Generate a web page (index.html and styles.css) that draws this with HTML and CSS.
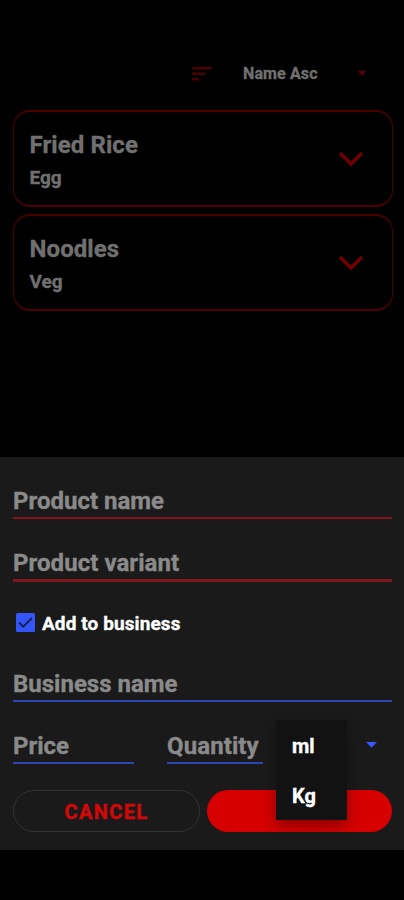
FILE: index.html
```html
<!DOCTYPE html>
<html lang="en">
<head>
<meta charset="utf-8">
<title>Products</title>
<link rel="stylesheet" href="styles.css">
</head>
<body>
<main class="screen">
  <section class="products">
    <div class="sort-bar">
      <svg class="sort-icon" width="20" height="14" viewBox="0 0 20 14"><path d="M0 0h20v2.6H0zM0 5.6h13.5v2.5H0zM0 11h7v2.6H0z" fill="#4a0000"/></svg>
      <span class="sort-label">Name Asc</span>
      <svg class="sort-caret" width="8" height="5" viewBox="0 0 8 5"><path d="M0 0h8L4 4.8z" fill="#620000"/></svg>
    </div>
    <article class="card">
      <div>
        <h2 class="card-title">Fried Rice</h2>
        <p class="card-sub">Egg</p>
      </div>
      <svg width="26" height="16" viewBox="0 0 26 16"><path d="M2 2l11 11L24 2" fill="none" stroke="#700000" stroke-width="3.6"/></svg>
    </article>
    <article class="card">
      <div>
        <h2 class="card-title">Noodles</h2>
        <p class="card-sub">Veg</p>
      </div>
      <svg width="26" height="16" viewBox="0 0 26 16"><path d="M2 2l11 11L24 2" fill="none" stroke="#700000" stroke-width="3.6"/></svg>
    </article>
  </section>
  <form class="sheet">
    <div class="field red">Product name</div>
    <div class="field red variant">Product variant</div>
    <div class="check-row">
      <svg width="19" height="19" viewBox="0 0 19 19"><rect width="19" height="19" rx="1.5" fill="#3355fa"/><path d="M3 9.5l4.2 4.2L16 5" fill="none" stroke="#17204f" stroke-width="1.8"/></svg>
      <span class="check-label">Add to business</span>
    </div>
    <div class="field blue business">Business name</div>
    <div class="amounts">
      <div class="field blue price">Price</div>
      <div class="field blue quantity">Quantity</div>
      <div class="unit">
        <svg width="11" height="6" viewBox="0 0 11 6"><path d="M0 0h11L5.5 5.8z" fill="#3558ff"/></svg>
        <div class="menu">
          <div class="option">ml</div>
          <div class="option">Kg</div>
        </div>
      </div>
    </div>
    <div class="actions">
      <button type="button" class="btn cancel">CANCEL</button>
      <button type="button" class="btn submit"></button>
    </div>
  </form>
</main>
</body>
</html>
```
FILE: styles.css
```css
* { box-sizing: border-box; }
body {
  margin: 0;
  background: #000;
  font-family: Roboto, "Liberation Sans", sans-serif;
  font-weight: 700;
  -webkit-text-stroke: 0.35px currentColor;
}
.screen { width: 404px; height: 900px; overflow: hidden; }
svg { display: block; flex: none; }
.products { height: 457px; padding: 0 11px 0 12.5px; }
.sort-bar {
  height: 110px;
  padding: 38px 27px 0 0;
  display: flex;
  align-items: center;
  justify-content: flex-end;
}
.sort-label {
  width: 115px;
  margin-left: 31px;
  font-size: 16px;
  letter-spacing: 0.12px;
  line-height: 20px;
  color: #707070;
}
.sort-icon { margin-top: -1px; }
.sort-caret { margin-top: -2px; }
.card {
  height: 97px;
  margin-bottom: 7px;
  padding: 0 28px 0 16px;
  border: 2px solid #4a0000;
  border-left-width: 1.5px;
  border-right-width: 1.5px;
  border-radius: 17px;
  display: flex;
  align-items: center;
  justify-content: space-between;
}
.card-title {
  margin: 3px 0 7px;
  font-size: 24px;
  letter-spacing: 0.08px;
  line-height: 28px;
  color: #707070;
}
.card-sub { margin: 0; font-size: 19px; line-height: 24px; color: #707070; }
.sheet {
  height: 393px;
  padding: 23px 12px 0 13px;
  background: #1a1a1a;
}
.field {
  height: 39px;
  padding-top: 6px;
  font-size: 24px;
  line-height: 30px;
  color: #8a8a8a;
  white-space: nowrap;
}
.red { border-bottom: 2px solid #7e1719; }
.blue { border-bottom: 2px solid #3045b4; }
.variant { height: 40px; margin-top: 23px; border-bottom-width: 3px; letter-spacing: 0.05px; }
.check-row {
  height: 20px;
  margin-top: 31px;
  padding-left: 3px;
  display: flex;
  align-items: flex-start;
  gap: 7px;
}
.check-label { font-size: 19px; letter-spacing: 0.1px; line-height: 22px; color: #fff; }
.business { margin-top: 30px; }
.amounts { display: flex; margin-top: 23px; }
.price { width: 121px; }
.quantity { width: 96px; margin-left: 33px; letter-spacing: 0.1px; }
.unit {
  position: relative;
  flex: 1;
  display: flex;
  justify-content: flex-end;
  align-items: center;
  padding-right: 15px;
}
.menu {
  position: absolute;
  left: 13px;
  top: -5px;
  width: 71px;
  height: 100px;
  background: #121212;
  box-shadow: 0 6px 14px rgba(0, 0, 0, 0.35);
}
.option {
  height: 50px;
  padding-left: 16px;
  font-size: 20px;
  line-height: 52px;
  color: #fff;
}
.actions { display: flex; gap: 7px; margin-top: 26px; }
.btn {
  flex: 1;
  height: 42px;
  padding: 0;
  border: 0;
  border-radius: 21px;
  font: inherit;
}
.cancel {
  border: 1px solid #333;
  background: none;
  color: #d00808;
  font-size: 20px;
  line-height: 42px;
  letter-spacing: 1.35px;
  -webkit-text-stroke-width: 0.5px;
}
.submit { background: #d60000; }
```
